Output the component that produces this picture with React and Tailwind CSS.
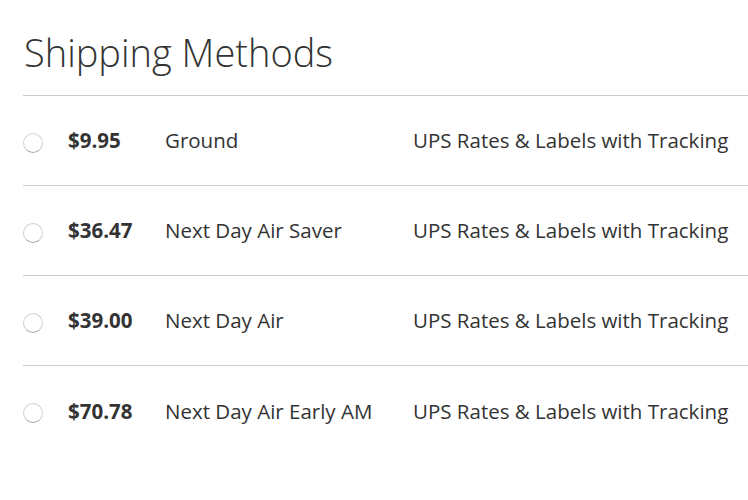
import React from "react";

const methods = [
  { price: "$9.95", name: "Ground", carrier: "UPS Rates & Labels with Tracking" },
  { price: "$36.47", name: "Next Day Air Saver", carrier: "UPS Rates & Labels with Tracking" },
  { price: "$39.00", name: "Next Day Air", carrier: "UPS Rates & Labels with Tracking" },
  { price: "$70.78", name: "Next Day Air Early AM", carrier: "UPS Rates & Labels with Tracking" },
];

export default function App() {
  return (
    <div
      className="bg-white min-h-[500px] pl-[23px] pt-[27px] text-[#333]"
      style={{ fontFamily: '"Open Sans", sans-serif' }}
    >
      <h1 className="text-[38px] font-light leading-[50px] text-[#333] pl-px">Shipping Methods</h1>
      <div className="mt-[18px] border-t border-[#cccccc]">
        {methods.map((m, i) => (
          <div
            key={i}
            className={`flex items-center h-[90px] text-[20.5px] ${
              i < methods.length - 1 ? "border-b border-[#cccccc]" : ""
            }`}
          >
            <div className="w-[45px] flex items-center pt-[4px]">
              <span className="block w-[20px] h-[20px] rounded-full border border-[#d2d2d2] border-b-[#a9a9a9] bg-white" />
            </div>
            <div className="w-[97px] font-bold">{m.price}</div>
            <div className="w-[248px]">{m.name}</div>
            <div className="whitespace-nowrap">{m.carrier}</div>
          </div>
        ))}
      </div>
    </div>
  );
}
